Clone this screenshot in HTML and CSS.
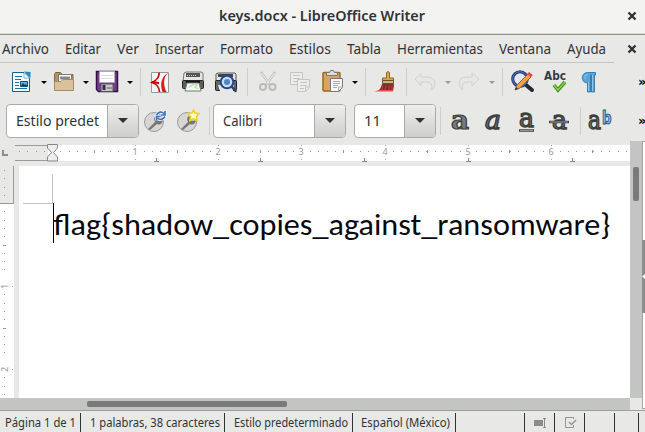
FILE: index.html
```html
<!DOCTYPE html>
<html lang="es">
<head>
<meta charset="utf-8">
<title>keys.docx - LibreOffice Writer</title>
<link rel="stylesheet" href="styles.css">
</head>
<body>
<div class="window">
<header class="titlebar">
  <svg class="title" width="206" height="24"><text x="0" y="17" textLength="206" lengthAdjust="spacingAndGlyphs">keys.docx - LibreOffice Writer</text></svg>
  <svg class="close" width="10" height="10"><path d="M1.5 1.5 8.5 8.5M8.5 1.5 1.5 8.5"/></svg>
</header>
<nav class="menubar">
  <svg width="47" height="24"><text x="0" y="17" textLength="47" lengthAdjust="spacingAndGlyphs">Archivo</text></svg>
  <svg width="36" height="24"><text x="0" y="17" textLength="36" lengthAdjust="spacingAndGlyphs">Editar</text></svg>
  <svg width="22" height="24"><text x="0" y="17" textLength="22" lengthAdjust="spacingAndGlyphs">Ver</text></svg>
  <svg width="49" height="24"><text x="0" y="17" textLength="49" lengthAdjust="spacingAndGlyphs">Insertar</text></svg>
  <svg width="53" height="24"><text x="0" y="17" textLength="53" lengthAdjust="spacingAndGlyphs">Formato</text></svg>
  <svg width="42" height="24"><text x="0" y="17" textLength="42" lengthAdjust="spacingAndGlyphs">Estilos</text></svg>
  <svg width="34" height="24"><text x="0" y="17" textLength="34" lengthAdjust="spacingAndGlyphs">Tabla</text></svg>
  <svg width="86" height="24"><text x="0" y="17" textLength="86" lengthAdjust="spacingAndGlyphs">Herramientas</text></svg>
  <svg width="52" height="24"><text x="0" y="17" textLength="52" lengthAdjust="spacingAndGlyphs">Ventana</text></svg>
  <svg width="39" height="24"><text x="0" y="17" textLength="39" lengthAdjust="spacingAndGlyphs">Ayuda</text></svg>
  <svg class="close" width="10" height="10"><path d="M1.5 1.5 8.5 8.5M8.5 1.5 1.5 8.5"/></svg>
</nav>
<div class="rule"></div>
<div class="toolbar standard">
  <svg class="icon" viewBox="0 0 24 24"><path d="M3.500 2.500H15L20.500 8V21.500H3.500Z" fill="#f4fbff" stroke="#17608f"/><path d="M15 1.500 21.500 8V2Z" fill="#2489c4"/><path d="M15 3V8H20" fill="#fff" stroke="#74b7da"/><path d="M6 6.500h7M6 9.500h6M6 12.500h4M6 15.500h4M6 18.500h12" stroke="#1773ad"/><path d="M11.500 11.500h7v5h-7Z" fill="#55b4ea" stroke="#174c72"/><path d="m12 16 2-3 2 2 1-1 1 2Z" fill="#173e5c"/></svg>
  <svg class="arrow" viewBox="0 0 12 24"><path d="M3 11h6l-3 3Z"/></svg>
  <svg class="icon" viewBox="0 0 24 24"><path d="M2.500 20V4.500l1-2h5l1.500 2h11V20Z" fill="#b39468" stroke="#80643b"/><path d="M6.500 4.500h13v9h-13Z" fill="#fff" stroke="#777"/><path d="M8 6.500h10v3H8Z" fill="#888"/><path d="M2.500 11.500H9l2-2h10.500v11h-19Z" fill="#d9c19b" stroke="#a48a60"/></svg>
  <svg class="arrow" viewBox="0 0 12 24"><path d="M3 11h6l-3 3Z"/></svg>
  <svg class="icon" viewBox="0 0 24 24"><path d="M1.500 1.500h21v20h-19l-2-2Z" fill="#70418a" stroke="#351047" stroke-width="1.500"/><path d="M4.500 1.500h15v11h-15Z" fill="#fff" stroke="#b6a3bf"/><path d="M6 5.500h12M6 8.500h12" stroke="#ddd"/><path d="M6 14h12v7.500H6Z" fill="#c5c8c3" stroke="#54505a"/><path d="M7.500 15h3v5h-3Z" fill="#482059"/><path d="M12 17h5v2h-5Z" fill="#92978f"/></svg>
  <svg class="arrow" viewBox="0 0 12 24"><path d="M3 11h6l-3 3Z"/></svg>
  <i class="sep"></i>
  <svg class="icon" viewBox="0 0 24 24"><path d="M3.500 2.500h17v20h-17Z" fill="#f5f5f5" stroke="#999"/><path d="M11 2.500q1 6-7 10 7 2 7.500 9.500" fill="none" stroke="#c41212" stroke-width="1.800"/><path d="m4 11 7 1v2l-7-1Z" fill="#c60000"/><path d="M20.500 3c-6 4-5 13-2 19h-4c-3-8-1-16 6-19Z" fill="#d91d1d"/></svg>
  <svg class="icon" viewBox="0 0 24 24"><path d="m3 3 2-1h15l2 1v9H2Z" fill="#e6e6e0" stroke="#777"/><path d="M5 3h14v4H5Z" fill="#555"/><path d="M6 5.500h10" stroke="#ccc" stroke-dasharray="1 1"/><rect x="1.500" y="10.500" width="21" height="8" rx="1" fill="#5d5d59" stroke="#252525"/><path d="M5 12h14" stroke="#111" stroke-width="2"/><path d="M6 13h12l2 8H4Z" fill="#f5faf3" stroke="#777"/><path d="m8 17 5-3 3 1-2 2 3 2" fill="none" stroke="#b5e4a8" stroke-width="1.500"/></svg>
  <svg class="icon" viewBox="0 0 24 24"><path d="m2 4 2-1h17l1 1v7H2Z" fill="#e6e6e0" stroke="#555"/><path d="M4 4h15v3H4Z" fill="#444"/><rect x="1.500" y="10.500" width="21" height="10" rx="1" fill="#666" stroke="#222"/><path d="m4 15 2 6h13l1-6Z" fill="#e4eae1"/><circle cx="13" cy="12" r="6.300" fill="#c9def2" stroke="#234995" stroke-width="2"/><circle cx="13" cy="12" r="3" fill="#5186bd"/><path d="m18 17 3.500 4" stroke="#30405f" stroke-width="2.500" stroke-linecap="round"/></svg>
  <i class="sep"></i>
  <svg class="icon" viewBox="0 0 24 24" fill="none" stroke="#bbb"><path d="m5 2 9 13M19 2l-9 13" stroke="#c3c3c3" stroke-width="2.500"/><path d="m5.500 3 8 11M18.500 3l-8 11" stroke="#ececea"/><circle cx="7" cy="17" r="3" stroke-width="2"/><circle cx="16.500" cy="17" r="3" stroke-width="2"/></svg>
  <svg class="icon" viewBox="0 0 24 24" fill="#ededec" stroke="#c4c4c2"><path d="M2.500 2.500h12v12h-12Z"/><path d="M5 5.500h7M5 8.500h7M5 11.500h4"/><path d="M9.500 9.500h12v8l-4 4h-8Z"/><path d="M12 12.500h7M12 15.500h7M12 18.500h4M17.500 21v-4h4"/></svg>
  <svg class="icon" viewBox="0 0 24 24"><rect x="2" y="2.500" width="17" height="18.500" rx="1" fill="#d9a45d" stroke="#9b6820" stroke-width="1.500"/><path d="M5.500 5.500V2.500h3l1-2h3l1 2h3v3Z" fill="#ddd" stroke="#777"/><path d="M9.500 8.500h12v9l-4 4h-8Z" fill="#f8f8f8" stroke="#777"/><path d="M12 11.500h7M12 13.500h7M12 15.500h5M12 17.500h4M17.500 21v-4h4" fill="none" stroke="#aaa"/></svg>
  <svg class="arrow" viewBox="0 0 12 24"><path d="M3 11h6l-3 3Z"/></svg>
  <i class="sep"></i>
  <svg class="icon" viewBox="0 0 24 24"><path d="M1 21.500c6-1 6-3 8-5.500h12l-1 5.500Z" fill="#f0464c"/><path d="M13.500 8V2.500q1.500-2 3 0V8h4v3h-11V8Z" fill="#d8a657" stroke="#93651e"/><path d="M9.500 10.500h11v3h-11Z" fill="#c9b58d" stroke="#745121"/><path d="m9 14-2 6h13l1-6Z" fill="#7e282c"/><path d="m10 15-1 5m4-5-1 5m4-5v5m3-5v5" stroke="#b6484c"/></svg>
  <i class="sep"></i>
  <svg class="icon" viewBox="0 0 24 24"><path d="m2 9 6-6v4h6q8 0 8 7 0 4-4 6 3-8-5-8H8v4Z" fill="#e6e6e4" stroke="#d2d2d0"/></svg>
  <svg class="arrow off" viewBox="0 0 12 24"><path d="M3 11h6l-3 3Z"/></svg>
  <svg class="icon" viewBox="0 0 24 24"><path d="m22 9-7-6v4H10q-8 0-8 7 0 4 4 6-3-8 5-8h4v4Z" fill="#e6e6e4" stroke="#d2d2d0"/></svg>
  <svg class="arrow off" viewBox="0 0 12 24"><path d="M3 11h6l-3 3Z"/></svg>
  <i class="sep"></i>
  <svg class="icon" viewBox="0 0 24 24"><path d="m16 15 6 5" stroke="#252a30" stroke-width="4" stroke-linecap="round"/><circle cx="10" cy="9" r="7.300" fill="#e2e8ef" stroke="#243773" stroke-width="3"/><circle cx="10" cy="9" r="7.300" fill="none" stroke="#5878bd"/><path d="m5 20 2-5L18 4l3 3L10 18Z" fill="#f3a142" stroke="#9b5923"/><path d="m17 4 2-2 4 3-2 2Z" fill="#e74c4c"/><path d="m5 20 1-3 2 2Z" fill="#333"/></svg>
  <svg class="icon" viewBox="0 0 24 24"><text class="abc" x="1" y="10" textLength="22" lengthAdjust="spacingAndGlyphs">Abc</text><path d="m11 15 4 5 7-8" fill="none" stroke="#398511" stroke-width="3.500"/><path d="m11 15 4 5 7-8" fill="none" stroke="#85d94d" stroke-width="1.600"/></svg>
  <svg class="icon" viewBox="0 0 24 24"><path d="M19.500 2.500v2.500h-1v17h-3v-17h-1v17h-3v-9c-7 0-7-10.500 0-10.500Z" fill="#56a6dd" stroke="#236ca2" stroke-width=".8"/><path d="M12 4.500q-5 .5-2.500 4.500M12.500 12v9M16.500 5v16" fill="none" stroke="#8ac5ec"/></svg>
  <b class="more">»</b>
</div>
<div class="toolbar formatting">
  <div class="combo style"><svg class="field" height="30" width="83"><text x="0" y="20" textLength="83" lengthAdjust="spacingAndGlyphs">Estilo predet</text></svg><span class="drop"><svg width="12" height="6"><path d="M1 0h10L6 5Z"/></svg></span></div>
  <svg class="icon" viewBox="0 0 24 24"><circle cx="11" cy="13" r="9.500" fill="#d6d6d4" stroke="#9b9b99"/><path d="m5 20 7-7c-2-4 0-6 3-7l-1 4 2 2 4-1c-1 5-4 5-6 4l-7 6Z" fill="#777"/><path d="M13.500 6q3.500-5 7.500-1.500M22 2v4h-4M22 7.500q-3.500 5-7.500 1.500M13.500 11.500v-4h4" fill="none" stroke="#f4f7fa" stroke-width="3"/><path d="M13.500 6q3.500-5 7.500-1.500M22 2v4h-4M22 7.500q-3.500 5-7.500 1.500M13.500 11.500v-4h4" fill="none" stroke="#3770b2" stroke-width="1.600"/></svg>
  <svg class="icon" viewBox="0 0 24 24"><circle cx="11" cy="13" r="9.500" fill="#d6d6d4" stroke="#9b9b99"/><path d="m5 20 7-7c-2-4 0-6 3-7l-1 4 2 2 4-1c-1 5-4 5-6 4l-7 6Z" fill="#777"/><path d="m17.500 1 1.500 3 4 .6-2.500 3 .5 4-3.500-1.600-3.500 1.600.5-4-2.500-3 4-.6Z" fill="#fffdd7" stroke="#ecd51e" stroke-width="1.600"/></svg>
  <i class="sep"></i>
  <div class="combo font"><svg class="field" height="30" width="39"><text x="0" y="20" textLength="39" lengthAdjust="spacingAndGlyphs">Calibri</text></svg><span class="drop"><svg width="12" height="6"><path d="M1 0h10L6 5Z"/></svg></span></div>
  <div class="combo size"><svg class="field" height="30" width="17"><text x="0" y="20" textLength="17" lengthAdjust="spacingAndGlyphs">11</text></svg><span class="drop"><svg width="12" height="6"><path d="M1 0h10L6 5Z"/></svg></span></div>
  <i class="sep"></i>
  <svg class="icon letter" viewBox="0 0 24 24"><text class="heavy" x="3" y="19.500" textLength="18" lengthAdjust="spacingAndGlyphs">a</text></svg>
  <svg class="icon letter" viewBox="0 0 24 24"><text class="slant" x="3" y="19.500" textLength="16" lengthAdjust="spacingAndGlyphs">a</text></svg>
  <svg class="icon letter" viewBox="0 0 24 24"><text x="4" y="18" textLength="15" lengthAdjust="spacingAndGlyphs">a</text><path d="M4 21.500h15" stroke="#3c3f3f" stroke-width="2.500"/><path d="M5 21.500h13" stroke="#999"/></svg>
  <svg class="icon letter" viewBox="0 0 24 24"><text x="4" y="19.500" textLength="15" lengthAdjust="spacingAndGlyphs">a</text><path d="M1 13h20" stroke="#3c3f3f" stroke-width="2.500"/><path d="M2 13h18" stroke="#999"/></svg>
  <i class="sep"></i>
  <svg class="icon letter" viewBox="0 0 24 24"><text x="1" y="19.500" textLength="13" lengthAdjust="spacingAndGlyphs">a</text><text class="super" x="15" y="15" textLength="9.500" lengthAdjust="spacingAndGlyphs">b</text></svg>
  <b class="more">»</b>
</div>
<main class="workspace">
  <section class="editor">
    <svg class="hruler" width="630" height="25" shape-rendering="crispEdges">
      <path d="M15 4h615v16H15Z" fill="#fff"/><path d="M15 4h33v16H15Z" fill="#e8e8e6"/>
      <path d="M15 4.500h33M15 19.500h33" stroke="#999"/>
      <path d="M2 9h2v4h4v2H2Z" fill="#8b8e8e"/>
      <path d="M19 10.500h26" stroke="#999" stroke-dasharray="1 7.300"/>
      <path d="M60.300 10.500h68M143.500 10.500h68M226.700 10.500h68M309.900 10.500h69M393.100 10.500h69M476.300 10.500h69M559.500 10.500h69" stroke="#999" stroke-dasharray="1 7.300"/>
      <path d="M94.500 9v3M177.500 9v3M260.500 9v3M343.500 9v3M427.500 9v3M509.500 9v3M592.500 9v3" stroke="#999"/>
      <path d="M135.500 4v1m0 13v1M218.500 4v1m0 13v1M301.500 4v1m0 13v1M385.500 4v1m0 13v1M468.500 4v1m0 13v1M551.500 4v1m0 13v1" stroke="#aaa"/>
      <path d="M156.500 17v3m-2.500 .5h5M260.500 17v3m-2.500 .5h5M364.500 17v3m-2.500 .5h5M468.500 17v3m-2.500 .5h5M572.500 17v3m-2.500 .5h5" stroke="#858888"/>
      <g text-anchor="middle"><text x="135" y="14">1</text><text x="218" y="14">2</text><text x="301" y="14">3</text><text x="385" y="14">4</text><text x="468" y="14">5</text><text x="551" y="14">6</text></g>
      <path d="M47.500 3.500h10V7l-4 4.500 4 4.500v4h-10v-4l4-4.500L47.500 7Z" fill="#eee" stroke="#858888" shape-rendering="auto"/>
    </svg>
    <div class="canvas">
      <svg class="vruler" width="14" height="232" shape-rendering="crispEdges">
        <path d="M0 0h14v232H0Z" fill="#fff"/><path d="M0 0h14v37H0Z" fill="#e8e8e6"/><path d="M0 37.500h13.500V0" fill="none" stroke="#999"/>
        <path d="M4.500 4v29M4.500 45.300v67M4.500 128.300v67M4.500 211.300v20" stroke="#999" stroke-dasharray="1 7.300"/>
        <path d="M3 79.500h3M3 162.500h3M12 120.500h1M12 203.500h1" stroke="#999"/>
        <text x="-123" y="8" transform="rotate(-90)">1</text><text x="-206" y="8" transform="rotate(-90)">2</text>
      </svg>
      <article class="page">
        <svg width="611" height="232"><path d="M33.500 8v29.500H4" fill="none" stroke="#c3c3c3"/><text class="flag" x="34.500" y="69" textLength="557" lengthAdjust="spacingAndGlyphs">flag{shadow_copies_against_ransomware}</text><path d="M34.500 37v40" stroke="#000"/></svg>
      </article>
    </div>
    <div class="hscroll"><i></i></div>
  </section>
  <div class="vscroll"><i></i><b></b></div>
  <aside class="splitter"><i><svg width="3" height="6"><path d="M3 0v5L0 2.500Z" fill="#fff"/></svg></i></aside>
</main>
<footer class="status">
  <span><svg width="71" height="20"><text x="0" y="16" textLength="71" lengthAdjust="spacingAndGlyphs">Página 1 de 1</text></svg></span>
  <span><svg width="130" height="20"><text x="0" y="16" textLength="130" lengthAdjust="spacingAndGlyphs">1 palabras, 38 caracteres</text></svg></span>
  <span><svg width="114" height="20"><text x="0" y="16" textLength="114" lengthAdjust="spacingAndGlyphs">Estilo predeterminado</text></svg></span>
  <span class="lang"><svg width="89" height="20"><text x="0" y="16" textLength="89" lengthAdjust="spacingAndGlyphs">Español (México)</text></svg></span>
  <span></span>
  <span><svg width="13" height="20" shape-rendering="crispEdges"><path d="M0 9h9v6H0Z" fill="#8b8d8d"/><path d="M9 7.500h3M10.500 7v10M9 16.500h3" stroke="#858888"/></svg></span>
  <span><svg width="13" height="20" fill="none" stroke="#929494"><path d="M9.500 8V6.500h-8v10h8V14"/><path d="m5 11 2.500 2.500 4.500-4.500" stroke-width="1.500"/></svg></span>
  <span></span><span></span><span></span>
</footer>
</div>
</body>
</html>
```
FILE: styles.css
```css
* { box-sizing: border-box; }
body { margin: 0; overflow: hidden; background: #e8e8e6; font-family: "Noto Sans", "Open Sans", sans-serif; }
svg { display: block; flex: none; overflow: visible; }
.window { width: 645px; height: 432px; display: flex; flex-direction: column; }
.titlebar { height: 35px; display: grid; grid-template-columns: 219px 408px 10px; align-items: center; background: #f3f3f2; border-bottom: 1px solid #8f9081; box-shadow: inset 0 -1px #deded9; }
.title { grid-column: 2; margin-top: -3px; font-size: 13.6px; font-weight: 600; fill: #2e3436; }
.titlebar .close { margin-top: -2px; }
.close path { stroke: #2e3436; stroke-width: 2.4; }
.menubar { height: 27px; display: flex; gap: 16px; padding-left: 2px; align-items: center; font-size: 14.4px; fill: #2e3436; }
.menubar .close { margin-left: 5px; }
.rule { width: 614px; height: 1px; background: #c6c6c3; }
.toolbar { display: grid; align-items: center; flex: none; }
.standard { height: 38px; padding-left: 9px; grid-template-columns: 29px 14px 28px 15px 29px 16px 8px 33px 33px 33px 9px 32px 33px 28px 16px 8px 33px 7px 29px 15px 29px 16px 8px 33px 33px 62px 7px; }
.formatting { height: 40px; padding-left: 6px; grid-template-columns: 137px 33px 33px 4px 141px 86px 8px 34px 33px 33px 32px 7px 51px 7px; }
.icon { width: 24px; height: 24px; }
.arrow { width: 12px; height: 24px; fill: #000; }
.off { fill: #999; }
.sep { width: 1px; height: 28px; background: #cececb; }
.more { font: bold 13px "DejaVu Sans", sans-serif; color: #000; margin-top: -1px; }
.abc { font: bold 12px "DejaVu Sans", sans-serif; fill: #344044; }
.combo { height: 34px; display: flex; align-items: center; border: 1px solid #a9aba8; border-radius: 4px; background: #fff; overflow: hidden; padding-left: 9px; }
.combo text { font-size: 14.8px; fill: #2e3436; }
.style { width: 133px; }
.font { width: 133px; }
.size { width: 82px; }
.drop { width: 31px; height: 32px; margin-left: auto; border-left: 1px solid #a9aba8; background: linear-gradient(#eeeeec, #cececb); display: flex; align-items: center; justify-content: center; }
.drop svg { fill: #2e3436; }
.letter text { font: 26px "DejaVu Serif", serif; fill: #777a7a; stroke: #3c3f3f; stroke-width: 1.5px; }
.letter .heavy { font-weight: bold; stroke-width: 1.2px; }
.letter .slant { font-style: italic; }
.letter .super { font: bold 17px "DejaVu Sans", sans-serif; fill: #8ab4e4; stroke: #245691; stroke-width: 1px; }
.workspace { height: 269px; display: flex; flex: none; }
.editor { width: 630px; }
.hruler text, .vruler text { font-size: 9px; fill: #999; }
.canvas { display: flex; gap: 5px; height: 232px; }
.page { width: 611px; height: 232px; background: #fff; }
.flag { font-family: Carlito, Lato, sans-serif; font-size: 31.3px; fill: #08080f; }
.hscroll { height: 12px; background: #c3c5c3; padding: 3px 0 0 87px; }
.hscroll i { display: block; width: 200px; height: 6px; background: #777b79; border-radius: 2px; }
.vscroll { width: 12px; display: flex; flex-direction: column; justify-content: space-between; background: #c3c5c3; }
.vscroll i { width: 6px; height: 34px; margin: 26px 0 0 3px; background: #777b79; border-radius: 2px; }
.vscroll b { width: 12px; height: 12px; background: #e8e8e6; }
.splitter { width: 3px; height: 268px; padding-top: 98px; border: 1px solid #a4a6a4; border-width: 1px 0 1px 1px; background: #fff; }
.splitter i { display: flex; align-items: center; width: 3px; height: 73px; margin-left: -1px; background: #8b8e8c; }
.status { height: 22px; border-top: 1px solid #a0a09b; display: grid; grid-template-columns: 81px 144px 128px 103px 69px 30px 30px 30px 24px 6px; font-size: 12.3px; fill: #2e3436; }
.status span { height: 19px; margin-top: 2px; border-right: 1px solid #2e3436; padding-left: 9px; }
.status span:first-child { padding-left: 5px; }
.status .lang { padding-left: 8px; }
.status span:last-child { border: 0; }
.status svg { margin-top: -2px; }
```
